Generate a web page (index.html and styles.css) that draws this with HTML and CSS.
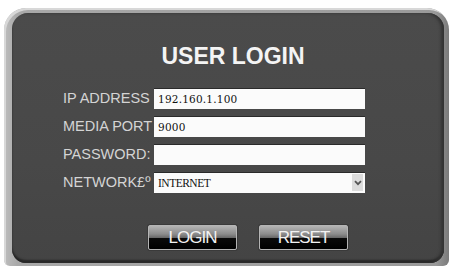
FILE: index.html
```html
<!DOCTYPE html>
<html>
<head>
<meta charset="utf-8">
<link rel="stylesheet" href="styles.css">
</head>
<body>
<div class="frame">
  <div class="panel">
    <h1 class="title">USER LOGIN</h1>
    <div class="form">
      <label class="label">IP ADDRESS</label>
      <div class="field">192.160.1.100</div>
      <label class="label">MEDIA PORT</label>
      <div class="field">9000</div>
      <label class="label">PASSWORD:</label>
      <div class="field"></div>
      <label class="label">NETWORK£º</label>
      <div class="field select">
        <span class="opt">INTERNET</span>
        <span class="arrow"><svg width="8" height="6" viewBox="0 0 8 6"><path d="M1 1.2 L4 4.2 L7 1.2" fill="none" stroke="#555" stroke-width="1.8"/></svg></span>
      </div>
    </div>
    <div class="buttons">
      <button class="btn">LOGIN</button>
      <button class="btn">RESET</button>
    </div>
  </div>
</div>
</body>
</html>
```
FILE: styles.css
```css
html, body {
  margin: 0;
  padding: 0;
  background: #ffffff;
}
.frame {
  margin: 8px 0 0 4px;
  width: 445px;
  height: 258px;
  box-sizing: border-box;
  padding: 5px 5px 3px 8px;
  border-radius: 22px 22px 6px 6px;
  background: linear-gradient(90deg, #bdbdbd 0, #a9a9a9 3%, #a2a2a2 50%, #9a9a9a 97%, #7a7a7a 100%);
  box-shadow: inset 2px 2px 0 #d8d8d8;
}
.panel {
  height: 100%;
  box-sizing: border-box;
  border-radius: 16px 16px 14px 14px;
  background: linear-gradient(180deg, #4b4b4b 0%, #484848 60%, #444444 100%);
  box-shadow: inset -3px 0 3px #333, inset 0 -3px 2px #262626;
  padding-top: 30px;
  font-family: "Liberation Sans", Arial, sans-serif;
}
.title {
  margin: 0;
  padding-left: 10px;
  text-align: center;
  font-size: 23px;
  line-height: 26px;
  font-weight: bold;
  color: #f4f4f4;
}
.form {
  margin: 18px 0 0 51px;
  display: grid;
  grid-template-columns: 91px 211px;
  grid-auto-rows: 22px;
  row-gap: 6px;
  align-items: center;
}
.label {
  font-size: 14.5px;
  color: #d4d4d4;
  white-space: nowrap;
  line-height: 22px;
}
.field {
  height: 21px;
  box-sizing: border-box;
  background: #fbfbfb;
  border-top: 1px solid #2a2a2a;
  padding-left: 4px;
  font-family: "DejaVu Serif", serif;
  font-size: 10.5px;
  letter-spacing: 0.2px;
  color: #111;
  line-height: 20px;
  display: flex;
  align-items: center;
}
.select {
  justify-content: space-between;
  padding-right: 2px;
}
.opt {
  font-family: "Liberation Serif", serif;
  font-size: 11.5px;
  letter-spacing: -0.5px;
}
.arrow {
  width: 11px;
  height: 17px;
  background: #dcdcdc;
  display: flex;
  align-items: center;
  justify-content: center;
}
.buttons {
  margin: 32px 0 0 136px;
  display: flex;
  gap: 22px;
}
.btn {
  width: 89px;
  height: 25px;
  box-sizing: border-box;
  border: 1px solid #b5b5b5;
  border-radius: 2px;
  background: linear-gradient(180deg, #b4b4b4 0%, #8c8c8c 35%, #6a6a6a 50%, #0a0a0a 52%, #000 100%);
  color: #f2f2f2;
  font-family: "Liberation Sans", Arial, sans-serif;
  font-size: 17px;
  letter-spacing: -1px;
  line-height: 21px;
  padding: 0 0 1px 0;
  text-align: center;
  box-shadow: 0 0 0 1px #3a3a3a;
}
```
